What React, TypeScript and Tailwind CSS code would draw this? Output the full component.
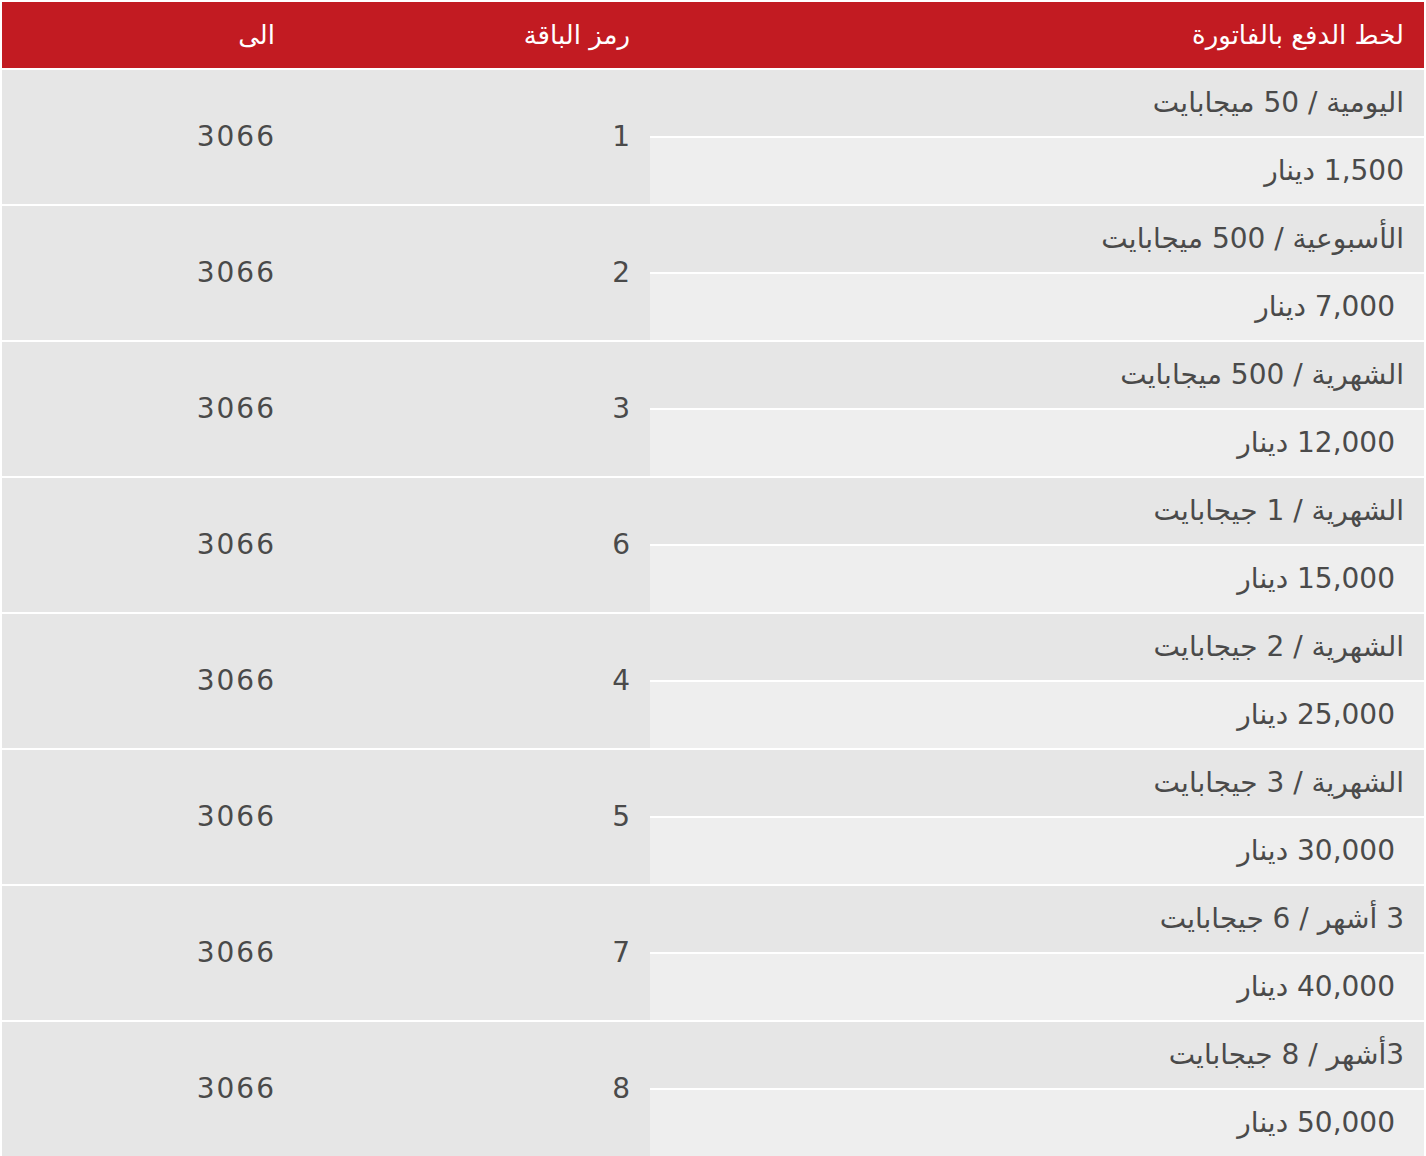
const rows = [
  { plan: "اليومية / 50 ميجابايت", price: "1,500 دينار", code: "1", indent: false },
  { plan: "الأسبوعية / 500 ميجابايت", price: "7,000 دينار", code: "2", indent: true },
  { plan: "الشهرية / 500 ميجابايت", price: "12,000 دينار", code: "3", indent: true },
  { plan: "الشهرية / 1 جيجابايت", price: "15,000 دينار", code: "6", indent: true },
  { plan: "الشهرية / 2 جيجابايت", price: "25,000 دينار", code: "4", indent: true },
  { plan: "الشهرية / 3 جيجابايت", price: "30,000 دينار", code: "5", indent: true },
  { plan: "3 أشهر / 6 جيجابايت", price: "40,000 دينار", code: "7", indent: true },
  { plan: "3أشهر / 8 جيجابايت", price: "50,000 دينار", code: "8", indent: true },
];

export default function App() {
  return (
    <div
      dir="rtl"
      className="min-h-screen bg-white px-[2px] pt-[2px] font-['DejaVu_Sans',sans-serif] text-[#4a4a4a]"
    >
      {/* header */}
      <div className="flex h-[66px] mb-[2px] bg-[#c21b22] text-white text-[26px]">
        <div className="w-[774px] flex items-center pr-5">لخط الدفع بالفاتورة</div>
        <div className="w-[355px] flex items-center pr-5">رمز الباقة</div>
        <div className="flex-1 flex items-center pr-5">الى</div>
      </div>

      {rows.map((r) => (
        <div key={r.code} className="flex mb-[2px] text-[28px]">
          <div className="w-[774px] flex flex-col">
            <div className="h-[66px] bg-[#e6e6e6] border-b-2 border-white box-content flex items-center pr-5 tracking-[0.3px]">
              {r.plan}
            </div>
            <div
              className={`h-[66px] bg-[#eeeeee] flex items-center tracking-[0.5px] ${
                r.indent ? "pr-[29px]" : "pr-5"
              }`}
            >
              {r.price}
            </div>
          </div>
          <div className="w-[355px] bg-[#e6e6e6] flex items-center pr-5">{r.code}</div>
          <div className="flex-1 bg-[#e6e6e6] flex items-center pr-[19px] tracking-[2px]">3066</div>
        </div>
      ))}
    </div>
  );
}
